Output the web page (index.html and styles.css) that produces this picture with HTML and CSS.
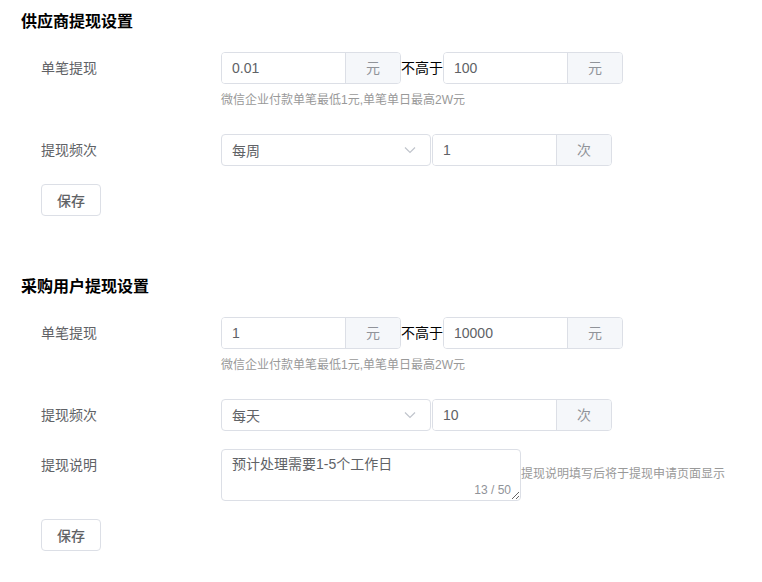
FILE: index.html
```html
<!DOCTYPE html>
<html lang="zh-CN">
<head>
<meta charset="utf-8">
<title>提现设置</title>
<link rel="stylesheet" href="styles.css">
</head>
<body>
<div class="page">
  <section class="block">
    <h2 class="title">供应商提现设置</h2>
    <div class="form">
      <div class="item item-hint">
        <label class="label">单笔提现</label>
        <div class="content">
          <div class="line">
            <div class="group">
              <div class="field">0.01</div>
              <div class="append">元</div>
            </div>
            <span class="sep">不高于</span>
            <div class="group">
              <div class="field">100</div>
              <div class="append">元</div>
            </div>
          </div>
          <div class="hint">微信企业付款单笔最低1元,单笔单日最高2W元</div>
        </div>
      </div>
      <div class="item">
        <label class="label">提现频次</label>
        <div class="content">
          <div class="line">
            <div class="select">
              <span>每周</span>
              <svg class="arrow" width="12" height="8" viewBox="0 0 12 8"><path d="M1 1.5 L6 6.5 L11 1.5" fill="none" stroke="#c0c4cc" stroke-width="1.2"/></svg>
            </div>
            <div class="group group-freq">
              <div class="field">1</div>
              <div class="append">次</div>
            </div>
          </div>
        </div>
      </div>
      <button class="btn">保存</button>
    </div>
  </section>

  <section class="block block-second">
    <h2 class="title">采购用户提现设置</h2>
    <div class="form">
      <div class="item item-hint">
        <label class="label">单笔提现</label>
        <div class="content">
          <div class="line">
            <div class="group">
              <div class="field">1</div>
              <div class="append">元</div>
            </div>
            <span class="sep">不高于</span>
            <div class="group">
              <div class="field">10000</div>
              <div class="append">元</div>
            </div>
          </div>
          <div class="hint">微信企业付款单笔最低1元,单笔单日最高2W元</div>
        </div>
      </div>
      <div class="item">
        <label class="label">提现频次</label>
        <div class="content">
          <div class="line">
            <div class="select">
              <span>每天</span>
              <svg class="arrow" width="12" height="8" viewBox="0 0 12 8"><path d="M1 1.5 L6 6.5 L11 1.5" fill="none" stroke="#c0c4cc" stroke-width="1.2"/></svg>
            </div>
            <div class="group group-freq">
              <div class="field">10</div>
              <div class="append">次</div>
            </div>
          </div>
        </div>
      </div>
      <div class="item">
        <label class="label">提现说明</label>
        <div class="content">
          <div class="line line-center">
            <div class="textarea-wrap">
              <textarea class="textarea">预计处理需要1-5个工作日</textarea>
              <span class="count">13 / 50</span>
            </div>
            <span class="side-hint">提现说明填写后将于提现申请页面显示</span>
          </div>
        </div>
      </div>
      <button class="btn">保存</button>
    </div>
  </section>
</div>
</body>
</html>
```

FILE: styles.css
```css
* { box-sizing: border-box; }
html, body { margin: 0; padding: 0; background: #fff; }
body {
  font-family: "Liberation Sans", "Noto Sans CJK SC", sans-serif;
  font-size: 14px;
  color: #606266;
}
.page { padding: 10px 0 0 21px; }
.block-second { margin-top: 59px; }
.title {
  margin: 0 0 18px;
  font-size: 16px;
  line-height: 24px;
  font-weight: bold;
  color: #000;
}
.form { padding-left: 20px; }
.item { display: flex; margin-bottom: 18px; }
.item-hint { margin-bottom: 26px; }
.label {
  width: 180px;
  flex: none;
  line-height: 32px;
  color: #606266;
}
.content { flex: 1; }
.line { display: flex; align-items: flex-start; }
.line-center { align-items: center; }
.group {
  display: flex;
  width: 180px;
  height: 32px;
  border: 1px solid #dcdfe6;
  border-radius: 4px;
  overflow: hidden;
}
.group-freq { margin-left: 1px; }
.field {
  flex: 1;
  padding-left: 10px;
  line-height: 30px;
  color: #606266;
  background: #fff;
}
.append {
  width: 55px;
  flex: none;
  text-align: center;
  line-height: 30px;
  background: #f5f7fa;
  color: #909399;
  border-left: 1px solid #dcdfe6;
}
.sep {
  width: 42px;
  line-height: 32px;
  color: #000;
  flex: none;
}
.hint {
  margin-top: 8px;
  font-size: 12px;
  line-height: 16px;
  color: #999;
}
.select {
  width: 210px;
  height: 32px;
  border: 1px solid #dcdfe6;
  border-radius: 4px;
  display: flex;
  align-items: center;
  justify-content: space-between;
  padding: 0 14px 0 10px;
  color: #606266;
}
.arrow { display: block; }
.textarea-wrap {
  position: relative;
  width: 300px;
  height: 52px;
  flex: none;
}
.textarea {
  display: block;
  width: 300px;
  height: 52px;
  margin: 0;
  padding: 4px 10px;
  border: 1px solid #dcdfe6;
  border-radius: 4px;
  font-family: inherit;
  font-size: 14px;
  line-height: 21px;
  color: #606266;
  resize: vertical;
  outline: none;
}
.count {
  position: absolute;
  right: 10px;
  bottom: 3px;
  font-size: 12px;
  line-height: 16px;
  color: #909399;
  background: #fff;
}
.side-hint {
  font-size: 12px;
  line-height: 16px;
  color: #999;
  margin-top: -2px;
}
.btn {
  display: block;
  width: 60px;
  height: 32px;
  padding: 0;
  border: 1px solid #dcdfe6;
  border-radius: 4px;
  background: #fff;
  color: #606266;
  font-family: inherit;
  font-size: 14px;
  font-weight: 500;
}
```
